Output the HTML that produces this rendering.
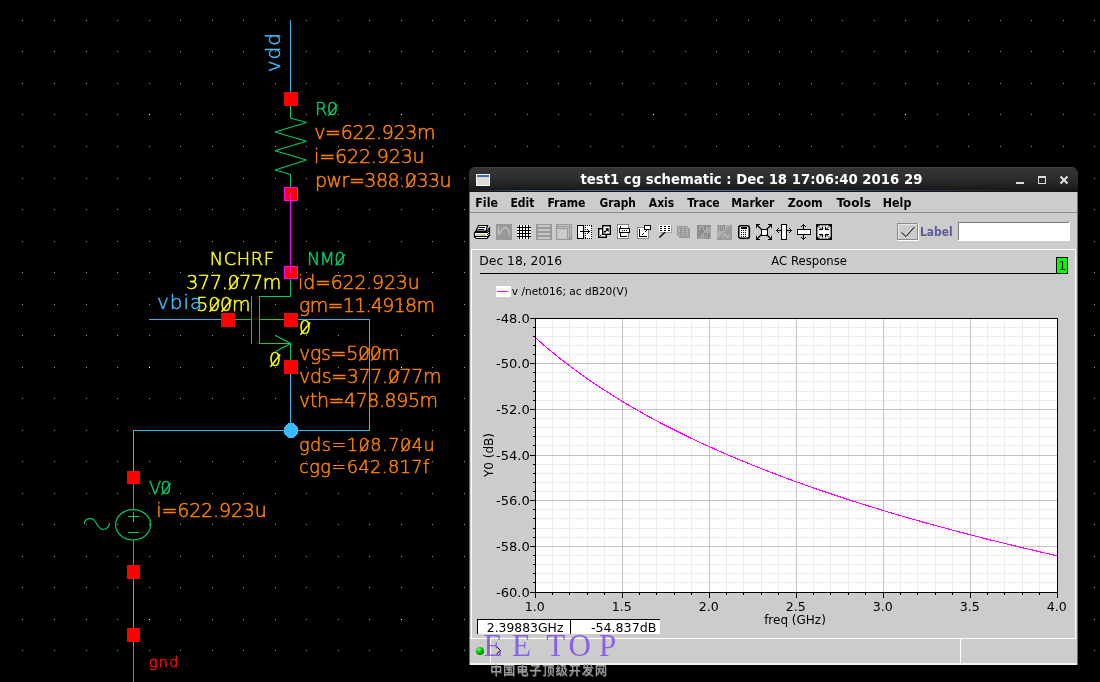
<!DOCTYPE html>
<html><head><meta charset="utf-8"><title>test1 cg schematic</title>
<style>
html,body{margin:0;padding:0;background:#000;}
body{width:1100px;height:682px;position:relative;overflow:hidden;font-family:"DejaVu Sans","Liberation Sans",sans-serif;}
svg.sch,svg.plot{position:absolute;left:0;top:0;will-change:transform;}
.a{position:absolute;}
#title{position:absolute;left:469px;top:167px;width:609px;height:25px;border-radius:6px 6px 0 0;background:linear-gradient(#4a4a4a 0,#343434 1px,#303030 9px,#282828 15px,#1e1e1e 20px,#191919 23px,#141414 25px);overflow:hidden;}
#title .glow{position:absolute;left:0;top:22.6px;width:609px;height:1.3px;background:linear-gradient(90deg,rgba(80,120,180,0) 0,rgba(84,124,186,.7) 10%,rgba(90,130,190,.85) 45%,rgba(84,124,186,.3) 75%,rgba(84,124,186,0) 95%);}
#win{position:absolute;left:469px;top:192px;width:609px;height:473px;background:#ccc;box-sizing:border-box;border-left:1px solid #6c6c6c;border-right:1px solid #6c6c6c;}
#menubar{position:absolute;left:-1px;top:0;width:608px;height:20px;border-bottom:1px solid #8c8c8c;}
#toolbar{position:absolute;left:-1px;top:21px;width:608px;height:35px;}
#panel{position:absolute;left:1px;top:57px;width:605px;height:389px;border-left:1px solid #fff;border-top:1px solid #fff;border-right:1px solid #fff;box-sizing:border-box;}
#status{position:absolute;left:0px;top:446px;width:607px;height:27px;border-top:1px solid #fff;border-bottom:2px solid #f2f2f2;box-sizing:border-box;}
.ro{position:absolute;top:427px;height:15px;background:#fff;border-left:1px solid #000;border-top:1px solid #000;box-sizing:border-box;font-size:12px;line-height:14px;white-space:nowrap;}
</style></head>
<body>
<svg class="sch" width="1100" height="682" viewBox="0 0 1100 682"><path d="M22 20.5h1M54 20.5h1M86 20.5h1M117 20.5h1M149 20.5h1M180 20.5h1M212 20.5h1M243 20.5h1M275 20.5h1M306 20.5h1M338 20.5h1M369 20.5h1M401 20.5h1M432 20.5h1M464 20.5h1M495 20.5h1M527 20.5h1M558 20.5h1M590 20.5h1M622 20.5h1M653 20.5h1M685 20.5h1M716 20.5h1M748 20.5h1M779 20.5h1M811 20.5h1M842 20.5h1M874 20.5h1M905 20.5h1M937 20.5h1M968 20.5h1M1000 20.5h1M1031 20.5h1M1063 20.5h1M1094 20.5h1M22 51.5h1M54 51.5h1M86 51.5h1M117 51.5h1M149 51.5h1M180 51.5h1M212 51.5h1M243 51.5h1M275 51.5h1M306 51.5h1M338 51.5h1M369 51.5h1M401 51.5h1M432 51.5h1M464 51.5h1M495 51.5h1M527 51.5h1M558 51.5h1M590 51.5h1M622 51.5h1M653 51.5h1M685 51.5h1M716 51.5h1M748 51.5h1M779 51.5h1M811 51.5h1M842 51.5h1M874 51.5h1M905 51.5h1M937 51.5h1M968 51.5h1M1000 51.5h1M1031 51.5h1M1063 51.5h1M1094 51.5h1M22 83.5h1M54 83.5h1M86 83.5h1M117 83.5h1M149 83.5h1M180 83.5h1M212 83.5h1M243 83.5h1M275 83.5h1M306 83.5h1M338 83.5h1M369 83.5h1M401 83.5h1M432 83.5h1M464 83.5h1M495 83.5h1M527 83.5h1M558 83.5h1M590 83.5h1M622 83.5h1M653 83.5h1M685 83.5h1M716 83.5h1M748 83.5h1M779 83.5h1M811 83.5h1M842 83.5h1M874 83.5h1M905 83.5h1M937 83.5h1M968 83.5h1M1000 83.5h1M1031 83.5h1M1063 83.5h1M1094 83.5h1M22 114.5h1M54 114.5h1M86 114.5h1M117 114.5h1M180 114.5h1M212 114.5h1M243 114.5h1M275 114.5h1M306 114.5h1M338 114.5h1M369 114.5h1M432 114.5h1M464 114.5h1M495 114.5h1M527 114.5h1M558 114.5h1M590 114.5h1M622 114.5h1M685 114.5h1M716 114.5h1M748 114.5h1M779 114.5h1M811 114.5h1M842 114.5h1M874 114.5h1M937 114.5h1M968 114.5h1M1000 114.5h1M1031 114.5h1M1063 114.5h1M1094 114.5h1M22 146.5h1M54 146.5h1M86 146.5h1M117 146.5h1M149 146.5h1M180 146.5h1M212 146.5h1M243 146.5h1M275 146.5h1M306 146.5h1M338 146.5h1M369 146.5h1M401 146.5h1M432 146.5h1M464 146.5h1M495 146.5h1M527 146.5h1M558 146.5h1M590 146.5h1M622 146.5h1M653 146.5h1M685 146.5h1M716 146.5h1M748 146.5h1M779 146.5h1M811 146.5h1M842 146.5h1M874 146.5h1M905 146.5h1M937 146.5h1M968 146.5h1M1000 146.5h1M1031 146.5h1M1063 146.5h1M1094 146.5h1M22 178.5h1M54 178.5h1M86 178.5h1M117 178.5h1M149 178.5h1M180 178.5h1M212 178.5h1M243 178.5h1M275 178.5h1M306 178.5h1M338 178.5h1M369 178.5h1M401 178.5h1M432 178.5h1M464 178.5h1M1094 178.5h1M22 209.5h1M54 209.5h1M86 209.5h1M117 209.5h1M149 209.5h1M180 209.5h1M212 209.5h1M243 209.5h1M275 209.5h1M306 209.5h1M338 209.5h1M369 209.5h1M401 209.5h1M432 209.5h1M464 209.5h1M1094 209.5h1M22 241.5h1M54 241.5h1M86 241.5h1M117 241.5h1M149 241.5h1M180 241.5h1M212 241.5h1M243 241.5h1M275 241.5h1M306 241.5h1M338 241.5h1M369 241.5h1M401 241.5h1M432 241.5h1M464 241.5h1M1094 241.5h1M22 272.5h1M54 272.5h1M86 272.5h1M117 272.5h1M149 272.5h1M180 272.5h1M212 272.5h1M243 272.5h1M275 272.5h1M306 272.5h1M338 272.5h1M369 272.5h1M401 272.5h1M432 272.5h1M464 272.5h1M1094 272.5h1M22 304.5h1M54 304.5h1M86 304.5h1M117 304.5h1M149 304.5h1M180 304.5h1M212 304.5h1M243 304.5h1M275 304.5h1M306 304.5h1M338 304.5h1M369 304.5h1M401 304.5h1M432 304.5h1M464 304.5h1M1094 304.5h1M22 335.5h1M54 335.5h1M86 335.5h1M117 335.5h1M149 335.5h1M180 335.5h1M212 335.5h1M243 335.5h1M275 335.5h1M306 335.5h1M338 335.5h1M369 335.5h1M401 335.5h1M432 335.5h1M464 335.5h1M1094 335.5h1M22 367.5h1M54 367.5h1M86 367.5h1M117 367.5h1M180 367.5h1M212 367.5h1M243 367.5h1M275 367.5h1M306 367.5h1M338 367.5h1M369 367.5h1M432 367.5h1M464 367.5h1M1094 367.5h1M22 398.5h1M54 398.5h1M86 398.5h1M117 398.5h1M149 398.5h1M180 398.5h1M212 398.5h1M243 398.5h1M275 398.5h1M306 398.5h1M338 398.5h1M369 398.5h1M401 398.5h1M432 398.5h1M464 398.5h1M1094 398.5h1M22 430.5h1M54 430.5h1M86 430.5h1M117 430.5h1M149 430.5h1M180 430.5h1M212 430.5h1M243 430.5h1M275 430.5h1M306 430.5h1M338 430.5h1M369 430.5h1M401 430.5h1M432 430.5h1M464 430.5h1M1094 430.5h1M22 461.5h1M54 461.5h1M86 461.5h1M117 461.5h1M149 461.5h1M180 461.5h1M212 461.5h1M243 461.5h1M275 461.5h1M306 461.5h1M338 461.5h1M369 461.5h1M401 461.5h1M432 461.5h1M464 461.5h1M1094 461.5h1M22 493.5h1M54 493.5h1M86 493.5h1M117 493.5h1M149 493.5h1M180 493.5h1M212 493.5h1M243 493.5h1M275 493.5h1M306 493.5h1M338 493.5h1M369 493.5h1M401 493.5h1M432 493.5h1M464 493.5h1M1094 493.5h1M22 524.5h1M54 524.5h1M86 524.5h1M117 524.5h1M149 524.5h1M180 524.5h1M212 524.5h1M243 524.5h1M275 524.5h1M306 524.5h1M338 524.5h1M369 524.5h1M401 524.5h1M432 524.5h1M464 524.5h1M1094 524.5h1M22 556.5h1M54 556.5h1M86 556.5h1M117 556.5h1M149 556.5h1M180 556.5h1M212 556.5h1M243 556.5h1M275 556.5h1M306 556.5h1M338 556.5h1M369 556.5h1M401 556.5h1M432 556.5h1M464 556.5h1M1094 556.5h1M22 587.5h1M54 587.5h1M86 587.5h1M117 587.5h1M149 587.5h1M180 587.5h1M212 587.5h1M243 587.5h1M275 587.5h1M306 587.5h1M338 587.5h1M369 587.5h1M401 587.5h1M432 587.5h1M464 587.5h1M1094 587.5h1M22 619.5h1M54 619.5h1M86 619.5h1M117 619.5h1M180 619.5h1M212 619.5h1M243 619.5h1M275 619.5h1M306 619.5h1M338 619.5h1M369 619.5h1M432 619.5h1M464 619.5h1M1094 619.5h1M22 650.5h1M54 650.5h1M86 650.5h1M117 650.5h1M149 650.5h1M180 650.5h1M212 650.5h1M243 650.5h1M275 650.5h1M306 650.5h1M338 650.5h1M369 650.5h1M401 650.5h1M432 650.5h1M464 650.5h1M1094 650.5h1" stroke="#9898b0"/><path d="M149 114.5h1M401 114.5h1M653 114.5h1M905 114.5h1M149 367.5h1M401 367.5h1M149 619.5h1M401 619.5h1" stroke="#fff"/><g shape-rendering="crispEdges"><g font-family="'DejaVu Sans Light','DejaVu Sans',sans-serif" font-weight="200" stroke-width="0.5" shape-rendering="auto"><text x="314.9" y="115.0" font-size="17.8" fill="#00cc66" stroke="#00cc66" letter-spacing="-0.4">R0̷</text><text x="314.2" y="139.0" font-size="19.0" fill="#ff8000" stroke="#ff8000" letter-spacing="-0.33">v=622.923m</text><text x="314.1" y="163.0" font-size="19.0" fill="#ff8000" stroke="#ff8000" letter-spacing="-0.14">i=622.923u</text><text x="314.9" y="186.5" font-size="19.0" fill="#ff8000" stroke="#ff8000" letter-spacing="-0.47">pwr=388.0̷33u</text><text x="209.7" y="265.0" font-size="17.8" fill="#ffff00" stroke="#ffff00" letter-spacing="0.66">NCHRF</text><text x="306.9" y="265.0" font-size="17.8" fill="#00cc66" stroke="#00cc66" letter-spacing="-0.7">NM0̷</text><text x="186.3" y="289.0" font-size="19.0" fill="#ffff00" stroke="#ffff00" letter-spacing="-0.29">377.0̷77m</text><text x="196.2" y="311.0" font-size="19.0" fill="#ffff00" stroke="#ffff00" letter-spacing="-0.14">50̷0̷m</text><text x="298.1" y="289.0" font-size="19.0" fill="#ff8000" stroke="#ff8000" letter-spacing="-0.22">id=622.923u</text><text x="299.1" y="312.0" font-size="19.0" fill="#ff8000" stroke="#ff8000" letter-spacing="-0.7">gm=11.4918m</text><text x="299.0" y="334.3" font-size="19.0" fill="#ffff00" stroke="#ffff00">0̷</text><text x="269.0" y="365.5" font-size="19.0" fill="#ffff00" stroke="#ffff00">0̷</text><text x="299.1" y="359.5" font-size="19.0" fill="#ff8000" stroke="#ff8000" letter-spacing="-0.35">vgs=50̷0̷m</text><text x="299.1" y="383.2" font-size="19.0" fill="#ff8000" stroke="#ff8000" letter-spacing="-0.34">vds=377.0̷77m</text><text x="299.1" y="407.0" font-size="19.0" fill="#ff8000" stroke="#ff8000" letter-spacing="-0.43">vth=478.895m</text><text x="299.0" y="451.0" font-size="17.7" fill="#ff8000" stroke="#ff8000" letter-spacing="0.49">gds=10̷8.70̷4u</text><text x="299.0" y="472.9" font-size="17.7" fill="#ff8000" stroke="#ff8000" letter-spacing="0.47">cgg=642.817f</text><text x="149.0" y="493.8" font-size="17.8" fill="#00cc66" stroke="#00cc66" letter-spacing="-1.0">V0̷</text><text x="156.3" y="517.2" font-size="19.0" fill="#ff8000" stroke="#ff8000" letter-spacing="-0.14">i=622.923u</text><text x="148.9" y="666.7" font-size="14.3" fill="#ff0000" stroke="#ff0000" stroke-width="0.6" letter-spacing="1.3">gnd</text><text x="157.0" y="309.0" font-size="20.0" fill="#3cbcfa" stroke="#3cbcfa" letter-spacing="1.0">vbia</text><text transform="translate(279.8 72.2) rotate(-90)" font-size="20.0" fill="#3cbcfa" stroke="#3cbcfa" letter-spacing="0.9">vdd</text></g><rect x="290" y="20" width="1" height="72" fill="#33b5f5"/><rect x="290" y="106" width="1" height="12" fill="#00cc66"/><polyline points="290.5,118 306.5,122.5 275,132 306.5,141.3 275,150.7 306.5,160 275,170 290.5,174.5" fill="none" stroke="#00cc66" stroke-width="1.15" stroke-linejoin="bevel" shape-rendering="auto"/><rect x="290" y="174" width="1" height="13" fill="#00cc66"/><rect x="290" y="194" width="1" height="78" fill="#ff00ff"/><rect x="290" y="279" width="1" height="18" fill="#00cc66"/><rect x="259" y="296" width="32" height="1" fill="#00cc66"/><rect x="259" y="296" width="1" height="48" fill="#00cc66"/><rect x="251" y="296" width="1" height="48" fill="#00cc66"/><rect x="235" y="319" width="17" height="1" fill="#00cc66"/><rect x="259" y="319" width="25" height="1" fill="#00cc66"/><rect x="259" y="343" width="32" height="1" fill="#00cc66"/><rect x="290" y="343" width="1" height="17" fill="#00cc66"/><path d="M275.5 335.5L290.5 343.5L275.5 351.5" fill="none" stroke="#00cc66" stroke-width="1.15" stroke-linejoin="bevel" shape-rendering="auto"/><rect x="149" y="319" width="72" height="1" fill="#33b5f5"/><rect x="298" y="319" width="72" height="1" fill="#33b5f5"/><rect x="369" y="319" width="1" height="112" fill="#33b5f5"/><rect x="133" y="430" width="237" height="1" fill="#33b5f5"/><rect x="290" y="374" width="1" height="56" fill="#33b5f5"/><rect x="133" y="430" width="1" height="41" fill="#33b5f5"/><rect x="133" y="484" width="1" height="25" fill="#00cc66"/><rect x="133" y="540" width="1" height="25" fill="#00cc66"/><ellipse cx="133.1" cy="524.8" rx="17.5" ry="15.2" fill="none" stroke="#00cc66" stroke-width="1.15" shape-rendering="auto"/><rect x="128" y="516" width="11" height="1" fill="#00cc66"/><rect x="133" y="512" width="1" height="10" fill="#00cc66"/><rect x="128" y="532" width="11" height="1" fill="#00cc66"/><path d="M84.5 524 C84.5 517.4 93 517.4 95 521 C97 524 99 529.5 103 529.5 C107 529.5 109.5 526 109.5 523" fill="none" stroke="#00cc66" stroke-width="1.15" shape-rendering="auto"/><rect x="133" y="578" width="1" height="50" fill="#33b5f5"/><rect x="133" y="642" width="1" height="40" fill="#00cc66"/><rect x="284" y="92" width="14" height="14" fill="#ff0000"/><rect x="284" y="187" width="14" height="14" fill="#ff00ff"/><rect x="285" y="188" width="12" height="12" fill="#ff0000"/><rect x="284" y="266" width="14" height="13" fill="#ff00ff"/><rect x="285" y="267" width="12" height="11" fill="#ff0000"/><rect x="290" y="193" width="1" height="8" fill="#ff00ff"/><rect x="290" y="266" width="1" height="7" fill="#ff00ff"/><rect x="221" y="313" width="14" height="14" fill="#ff0000"/><rect x="284" y="313" width="14" height="14" fill="#ff0000"/><rect x="284" y="360" width="14" height="14" fill="#ff0000"/><rect x="127" y="471" width="13" height="13" fill="#ff0000"/><rect x="127" y="565" width="13" height="14" fill="#ff0000"/><rect x="127" y="628" width="13" height="14" fill="#ff0000"/><ellipse cx="291" cy="430.5" rx="7.2" ry="7.6" fill="#38bcff"/></g></svg>
<div id="title">
 <div class="glow"></div>
 <svg class="a" style="left:7px;top:7px" width="14" height="12"><rect x="0.5" y="0.5" width="13" height="11" fill="#dcdcd4" stroke="#f4f4f4"/><rect x="1" y="1" width="12" height="2" fill="#3b6cb4"/></svg>
 <svg class="a" style="left:540px;top:6px" width="64" height="14" shape-rendering="crispEdges"><rect x="7" y="9" width="8" height="2" fill="#dcdcdc"/><path d="M29.5 3.5h7v7h-7z" fill="none" stroke="#dcdcdc"/><rect x="29" y="3" width="8" height="2" fill="#dcdcdc"/><path d="M51.5 3.5l7 7M58.5 3.5l-7 7" stroke="#dcdcdc" stroke-width="2.2" shape-rendering="auto" fill="none"/></svg>
</div>
<div id="win">
 <div id="menubar"></div>
 <div id="toolbar"></div>
 <div id="panel"></div>
 <div class="ro" style="left:7px;width:93px"></div>
 <div class="ro" style="left:100px;width:90px"></div>
 <div id="status">
  <div class="a" style="left:20px;top:0;width:1px;height:24px;background:#fff"></div>
  <div class="a" style="left:490px;top:0;width:1px;height:24px;background:#fff"></div>
  <div class="a" style="left:6px;top:8px;width:8px;height:8px;border-radius:4px;background:radial-gradient(circle at 35% 30%,#6f6 0,#0b0 45%,#060 100%)"></div>
  <svg class="a" style="left:25px;top:7px" width="8" height="9"><path d="M1.5 0.5l4 4-4 3.5" fill="none" stroke="#000" stroke-width="1"/></svg>
 </div>
</div>
<svg class="plot" width="1100" height="682" viewBox="0 0 1100 682" shape-rendering="crispEdges"><rect x="535" y="318" width="523" height="275" fill="#fff"/><rect x="552" y="318" width="1" height="274" fill="#ececec"/><rect x="569" y="318" width="1" height="274" fill="#ececec"/><rect x="587" y="318" width="1" height="274" fill="#ececec"/><rect x="604" y="318" width="1" height="274" fill="#ececec"/><rect x="639" y="318" width="1" height="274" fill="#ececec"/><rect x="656" y="318" width="1" height="274" fill="#ececec"/><rect x="674" y="318" width="1" height="274" fill="#ececec"/><rect x="691" y="318" width="1" height="274" fill="#ececec"/><rect x="726" y="318" width="1" height="274" fill="#ececec"/><rect x="743" y="318" width="1" height="274" fill="#ececec"/><rect x="761" y="318" width="1" height="274" fill="#ececec"/><rect x="778" y="318" width="1" height="274" fill="#ececec"/><rect x="813" y="318" width="1" height="274" fill="#ececec"/><rect x="830" y="318" width="1" height="274" fill="#ececec"/><rect x="848" y="318" width="1" height="274" fill="#ececec"/><rect x="865" y="318" width="1" height="274" fill="#ececec"/><rect x="900" y="318" width="1" height="274" fill="#ececec"/><rect x="917" y="318" width="1" height="274" fill="#ececec"/><rect x="935" y="318" width="1" height="274" fill="#ececec"/><rect x="952" y="318" width="1" height="274" fill="#ececec"/><rect x="987" y="318" width="1" height="274" fill="#ececec"/><rect x="1004" y="318" width="1" height="274" fill="#ececec"/><rect x="1022" y="318" width="1" height="274" fill="#ececec"/><rect x="1039" y="318" width="1" height="274" fill="#ececec"/><rect x="535" y="327" width="522" height="1" fill="#ececec"/><rect x="535" y="336" width="522" height="1" fill="#ececec"/><rect x="535" y="345" width="522" height="1" fill="#ececec"/><rect x="535" y="354" width="522" height="1" fill="#ececec"/><rect x="535" y="372" width="522" height="1" fill="#ececec"/><rect x="535" y="381" width="522" height="1" fill="#ececec"/><rect x="535" y="391" width="522" height="1" fill="#ececec"/><rect x="535" y="400" width="522" height="1" fill="#ececec"/><rect x="535" y="418" width="522" height="1" fill="#ececec"/><rect x="535" y="427" width="522" height="1" fill="#ececec"/><rect x="535" y="436" width="522" height="1" fill="#ececec"/><rect x="535" y="445" width="522" height="1" fill="#ececec"/><rect x="535" y="464" width="522" height="1" fill="#ececec"/><rect x="535" y="473" width="522" height="1" fill="#ececec"/><rect x="535" y="482" width="522" height="1" fill="#ececec"/><rect x="535" y="491" width="522" height="1" fill="#ececec"/><rect x="535" y="509" width="522" height="1" fill="#ececec"/><rect x="535" y="518" width="522" height="1" fill="#ececec"/><rect x="535" y="528" width="522" height="1" fill="#ececec"/><rect x="535" y="537" width="522" height="1" fill="#ececec"/><rect x="535" y="555" width="522" height="1" fill="#ececec"/><rect x="535" y="564" width="522" height="1" fill="#ececec"/><rect x="535" y="573" width="522" height="1" fill="#ececec"/><rect x="535" y="582" width="522" height="1" fill="#ececec"/><rect x="622" y="318" width="1" height="274" fill="#c4c4c4"/><rect x="709" y="318" width="1" height="274" fill="#c4c4c4"/><rect x="796" y="318" width="1" height="274" fill="#c4c4c4"/><rect x="883" y="318" width="1" height="274" fill="#c4c4c4"/><rect x="970" y="318" width="1" height="274" fill="#c4c4c4"/><rect x="535" y="363" width="522" height="1" fill="#c4c4c4"/><rect x="535" y="409" width="522" height="1" fill="#c4c4c4"/><rect x="535" y="455" width="522" height="1" fill="#c4c4c4"/><rect x="535" y="500" width="522" height="1" fill="#c4c4c4"/><rect x="535" y="546" width="522" height="1" fill="#c4c4c4"/><polyline points="535.5,337.7 539.9,341.6 544.2,345.4 548.5,349.1 552.9,352.7 557.2,356.2 561.6,359.7 566.0,363.1 570.3,366.4 574.6,369.6 579.0,372.8 583.4,375.9 587.7,379.0 592.0,382.0 596.4,384.9 600.8,387.8 605.1,390.6 609.5,393.4 613.8,396.2 618.1,398.8 622.5,401.5 626.9,404.1 631.2,406.6 635.6,409.2 639.9,411.6 644.2,414.1 648.6,416.5 653.0,418.9 657.3,421.2 661.6,423.5 666.0,425.7 670.4,428.0 674.7,430.2 679.1,432.4 683.4,434.5 687.8,436.6 692.1,438.7 696.5,440.7 700.8,442.8 705.1,444.8 709.5,446.8 713.9,448.7 718.2,450.6 722.6,452.6 726.9,454.4 731.2,456.3 735.6,458.1 739.9,460.0 744.3,461.8 748.6,463.5 753.0,465.3 757.4,467.0 761.7,468.8 766.1,470.5 770.4,472.1 774.8,473.8 779.1,475.5 783.4,477.1 787.8,478.7 792.2,480.3 796.5,481.9 800.9,483.4 805.2,485.0 809.5,486.5 813.9,488.1 818.2,489.6 822.6,491.0 827.0,492.5 831.3,494.0 835.7,495.4 840.0,496.9 844.4,498.3 848.7,499.7 853.0,501.1 857.4,502.5 861.8,503.9 866.1,505.2 870.5,506.6 874.8,507.9 879.2,509.3 883.5,510.6 887.8,511.9 892.2,513.2 896.5,514.5 900.9,515.7 905.2,517.0 909.6,518.3 914.0,519.5 918.3,520.7 922.7,522.0 927.0,523.2 931.3,524.4 935.7,525.6 940.0,526.8 944.4,527.9 948.8,529.1 953.1,530.3 957.5,531.4 961.8,532.6 966.2,533.7 970.5,534.8 974.9,536.0 979.2,537.1 983.5,538.2 987.9,539.3 992.2,540.4 996.6,541.4 1001.0,542.5 1005.3,543.6 1009.7,544.6 1014.0,545.7 1018.4,546.7 1022.7,547.8 1027.0,548.8 1031.4,549.8 1035.8,550.8 1040.1,551.9 1044.5,552.9 1048.8,553.9 1053.2,554.9 1057.5,555.8" fill="none" stroke="#ff00ff" stroke-width="1.1"/><rect x="535" y="318" width="523" height="1" fill="#000"/><rect x="535" y="592" width="523" height="1" fill="#000"/><rect x="535" y="318" width="1" height="275" fill="#000"/><rect x="1057" y="318" width="1" height="275" fill="#000"/><rect x="530" y="318" width="5" height="1" fill="#000"/><rect x="533" y="327" width="2" height="1" fill="#000"/><rect x="533" y="336" width="2" height="1" fill="#000"/><rect x="533" y="345" width="2" height="1" fill="#000"/><rect x="533" y="354" width="2" height="1" fill="#000"/><rect x="530" y="363" width="5" height="1" fill="#000"/><rect x="533" y="372" width="2" height="1" fill="#000"/><rect x="533" y="381" width="2" height="1" fill="#000"/><rect x="533" y="391" width="2" height="1" fill="#000"/><rect x="533" y="400" width="2" height="1" fill="#000"/><rect x="530" y="409" width="5" height="1" fill="#000"/><rect x="533" y="418" width="2" height="1" fill="#000"/><rect x="533" y="427" width="2" height="1" fill="#000"/><rect x="533" y="436" width="2" height="1" fill="#000"/><rect x="533" y="445" width="2" height="1" fill="#000"/><rect x="530" y="455" width="5" height="1" fill="#000"/><rect x="533" y="464" width="2" height="1" fill="#000"/><rect x="533" y="473" width="2" height="1" fill="#000"/><rect x="533" y="482" width="2" height="1" fill="#000"/><rect x="533" y="491" width="2" height="1" fill="#000"/><rect x="530" y="500" width="5" height="1" fill="#000"/><rect x="533" y="509" width="2" height="1" fill="#000"/><rect x="533" y="518" width="2" height="1" fill="#000"/><rect x="533" y="528" width="2" height="1" fill="#000"/><rect x="533" y="537" width="2" height="1" fill="#000"/><rect x="530" y="546" width="5" height="1" fill="#000"/><rect x="533" y="555" width="2" height="1" fill="#000"/><rect x="533" y="564" width="2" height="1" fill="#000"/><rect x="533" y="573" width="2" height="1" fill="#000"/><rect x="533" y="582" width="2" height="1" fill="#000"/><rect x="530" y="592" width="5" height="1" fill="#000"/><rect x="535" y="593" width="1" height="5" fill="#000"/><rect x="552" y="593" width="1" height="2" fill="#000"/><rect x="569" y="593" width="1" height="2" fill="#000"/><rect x="587" y="593" width="1" height="2" fill="#000"/><rect x="604" y="593" width="1" height="2" fill="#000"/><rect x="622" y="593" width="1" height="5" fill="#000"/><rect x="639" y="593" width="1" height="2" fill="#000"/><rect x="656" y="593" width="1" height="2" fill="#000"/><rect x="674" y="593" width="1" height="2" fill="#000"/><rect x="691" y="593" width="1" height="2" fill="#000"/><rect x="709" y="593" width="1" height="5" fill="#000"/><rect x="726" y="593" width="1" height="2" fill="#000"/><rect x="743" y="593" width="1" height="2" fill="#000"/><rect x="761" y="593" width="1" height="2" fill="#000"/><rect x="778" y="593" width="1" height="2" fill="#000"/><rect x="796" y="593" width="1" height="5" fill="#000"/><rect x="813" y="593" width="1" height="2" fill="#000"/><rect x="830" y="593" width="1" height="2" fill="#000"/><rect x="848" y="593" width="1" height="2" fill="#000"/><rect x="865" y="593" width="1" height="2" fill="#000"/><rect x="883" y="593" width="1" height="5" fill="#000"/><rect x="900" y="593" width="1" height="2" fill="#000"/><rect x="917" y="593" width="1" height="2" fill="#000"/><rect x="935" y="593" width="1" height="2" fill="#000"/><rect x="952" y="593" width="1" height="2" fill="#000"/><rect x="970" y="593" width="1" height="5" fill="#000"/><rect x="987" y="593" width="1" height="2" fill="#000"/><rect x="1004" y="593" width="1" height="2" fill="#000"/><rect x="1022" y="593" width="1" height="2" fill="#000"/><rect x="1039" y="593" width="1" height="2" fill="#000"/><rect x="1057" y="593" width="1" height="5" fill="#000"/><g font-family="'DejaVu Sans',sans-serif" font-size="12" fill="#000"><text x="496" y="323.3" textLength="33.8" lengthAdjust="spacingAndGlyphs">-48.0</text><text x="496" y="368.3" textLength="33.8" lengthAdjust="spacingAndGlyphs">-50.0</text><text x="496" y="414.3" textLength="33.8" lengthAdjust="spacingAndGlyphs">-52.0</text><text x="496" y="460.3" textLength="33.8" lengthAdjust="spacingAndGlyphs">-54.0</text><text x="496" y="505.3" textLength="33.8" lengthAdjust="spacingAndGlyphs">-56.0</text><text x="496" y="551.3" textLength="33.8" lengthAdjust="spacingAndGlyphs">-58.0</text><text x="496" y="597.3" textLength="33.8" lengthAdjust="spacingAndGlyphs">-60.0</text><text x="524.8" y="610.6" textLength="20" lengthAdjust="spacingAndGlyphs">1.0</text><text x="611.8" y="610.6" textLength="20" lengthAdjust="spacingAndGlyphs">1.5</text><text x="698.8" y="610.6" textLength="20" lengthAdjust="spacingAndGlyphs">2.0</text><text x="785.8" y="610.6" textLength="20" lengthAdjust="spacingAndGlyphs">2.5</text><text x="872.8" y="610.6" textLength="20" lengthAdjust="spacingAndGlyphs">3.0</text><text x="959.8" y="610.6" textLength="20" lengthAdjust="spacingAndGlyphs">3.5</text><text x="1046.8" y="610.6" textLength="20" lengthAdjust="spacingAndGlyphs">4.0</text><text x="795" y="624" text-anchor="middle">freq (GHz)</text><text x="486.8" y="631.5" textLength="76.6" lengthAdjust="spacingAndGlyphs">2.39883GHz</text><text x="590.9" y="631.5" textLength="65.5" lengthAdjust="spacingAndGlyphs">-54.837dB</text><text transform="translate(493 455) rotate(-90)" text-anchor="middle">Y0 (dB)</text></g><g font-family="'DejaVu Sans',sans-serif" font-size="12" fill="#000"><text x="479.3" y="265" textLength="82.7" lengthAdjust="spacingAndGlyphs">Dec 18, 2016</text><text x="771.3" y="264.8" textLength="75.6" lengthAdjust="spacingAndGlyphs">AC Response</text><text x="511.8" y="295" font-size="10.2" textLength="116" lengthAdjust="spacingAndGlyphs">v /net016; ac dB20(V)</text></g><rect x="480" y="273" width="577" height="1" fill="#000"/><rect x="1056" y="257" width="12" height="17" fill="#000"/><rect x="1057" y="258" width="10" height="15" fill="#00ff00"/><text x="1058.5" y="270" font-family="DejaVu Sans,sans-serif" font-size="12">1</text><rect x="496" y="286" width="15" height="11" fill="#fff"/><rect x="497" y="291" width="11" height="1" fill="#ff00ff"/><polygon points="478.5,225.5 487.5,225.5 486,231 476,231" fill="#fff" stroke="#000" stroke-width="1.2" shape-rendering="auto"/><rect x="479" y="227" width="6" height="1" fill="#000"/><rect x="478" y="229" width="6" height="1" fill="#000"/><path d="M475.5 231.5h11.5l2.5-3.5v7l-2.5 3.5h-10.5l-2-1.5v-4z" fill="#fff" stroke="#000" stroke-width="1.2" shape-rendering="auto"/><rect x="475" y="232" width="12" height="1" fill="#000"/><rect x="475" y="233" width="12" height="1" fill="#fff"/><rect x="476" y="234" width="10" height="2" fill="#d0d0d0"/><rect x="481" y="234" width="3" height="2" fill="#e8e000"/><rect x="475" y="236" width="12" height="1" fill="#000"/><rect x="476" y="237" width="10" height="1" fill="#fff"/><rect x="488" y="229" width="1" height="1" fill="#000"/><rect x="489" y="230" width="1" height="1" fill="#000"/><rect x="488" y="231" width="1" height="1" fill="#000"/><rect x="489" y="232" width="1" height="1" fill="#000"/><rect x="488" y="233" width="1" height="1" fill="#000"/><rect x="489" y="234" width="1" height="1" fill="#000"/><rect x="488" y="235" width="1" height="1" fill="#000"/><rect x="487" y="236" width="1" height="1" fill="#000"/><rect x="487" y="234" width="1" height="1" fill="#000"/><rect x="487" y="232" width="1" height="1" fill="#000"/><rect x="496" y="224" width="16" height="16" fill="#999"/><path d="M498.5 226.5v8.5 M498.7 234 L501.5 231 M500.8 231.8 C502 229 503.2 227.6 505 227.6 C507.8 227.6 509.2 231 509.6 235.2" fill="none" stroke="#c4c4c4" stroke-width="1.3" shape-rendering="auto"/><path d="M519 225h10v1h1v1h1v10h-1v1h-1v1h-10v-1h-1v-1h-1v-10h1v-1h1z" fill="#fff"/><rect x="519" y="225" width="1" height="14" fill="#000"/><rect x="522" y="225" width="1" height="14" fill="#000"/><rect x="525" y="225" width="1" height="14" fill="#000"/><rect x="528" y="225" width="1" height="14" fill="#000"/><rect x="517" y="227" width="14" height="1" fill="#000"/><rect x="517" y="230" width="14" height="1" fill="#000"/><rect x="517" y="233" width="14" height="1" fill="#000"/><rect x="517" y="236" width="14" height="1" fill="#000"/><rect x="536" y="224" width="16" height="16" fill="#999"/><rect x="538" y="225" width="12" height="2" fill="#c6c6c6"/><rect x="538" y="229" width="12" height="2" fill="#c6c6c6"/><rect x="538" y="233" width="12" height="2" fill="#c6c6c6"/><rect x="538" y="237" width="12" height="2" fill="#c6c6c6"/><rect x="556" y="224" width="16" height="16" fill="#999"/><rect x="558" y="225" width="13" height="1" fill="#c2c2c2"/><rect x="570" y="225" width="1" height="11" fill="#c2c2c2"/><rect x="557" y="227" width="12" height="1" fill="#c2c2c2"/><rect x="568" y="227" width="1" height="11" fill="#c2c2c2"/><rect x="557" y="229" width="10" height="10" fill="#c6c6c6"/><rect x="558" y="230" width="8" height="8" fill="#cbcbcb"/><rect x="577" y="225" width="7" height="14" fill="#000"/><rect x="578" y="226" width="5" height="12" fill="#fff"/><rect x="585" y="225" width="7" height="14" fill="#fff"/><rect x="585" y="225" width="1" height="1" fill="#000"/><rect x="585" y="238" width="1" height="1" fill="#000"/><rect x="587" y="225" width="1" height="1" fill="#000"/><rect x="587" y="238" width="1" height="1" fill="#000"/><rect x="589" y="225" width="1" height="1" fill="#000"/><rect x="589" y="238" width="1" height="1" fill="#000"/><rect x="591" y="225" width="1" height="1" fill="#000"/><rect x="591" y="238" width="1" height="1" fill="#000"/><rect x="585" y="225" width="1" height="1" fill="#000"/><rect x="591" y="226" width="1" height="1" fill="#000"/><rect x="585" y="227" width="1" height="1" fill="#000"/><rect x="591" y="228" width="1" height="1" fill="#000"/><rect x="585" y="229" width="1" height="1" fill="#000"/><rect x="591" y="230" width="1" height="1" fill="#000"/><rect x="585" y="231" width="1" height="1" fill="#000"/><rect x="591" y="232" width="1" height="1" fill="#000"/><rect x="585" y="233" width="1" height="1" fill="#000"/><rect x="591" y="234" width="1" height="1" fill="#000"/><rect x="585" y="235" width="1" height="1" fill="#000"/><rect x="591" y="236" width="1" height="1" fill="#000"/><rect x="585" y="237" width="1" height="1" fill="#000"/><rect x="591" y="238" width="1" height="1" fill="#000"/><rect x="580" y="231" width="10" height="1" fill="#000"/><rect x="588" y="230" width="1" height="3" fill="#000"/><rect x="587" y="229" width="1" height="1" fill="#000"/><rect x="587" y="233" width="1" height="1" fill="#000"/><g shape-rendering="auto"><rect x="598" y="228" width="9" height="10" fill="#000"/><rect x="599.4" y="229.4" width="6.2" height="7.2" fill="#fff"/><rect x="602" y="225" width="9" height="10" fill="#000"/><rect x="603.4" y="226.4" width="6.2" height="7.2" fill="#fff"/><path d="M600.3 235.7l4.6-4.6" stroke="#000" stroke-width="1.1" stroke-dasharray="1.5 1.1" fill="none"/><polygon points="605,228.3 608.7,228.3 608.7,232" fill="#000"/><path d="M604.5 232.5l3-3" stroke="#000" stroke-width="1.1"/></g><rect x="617" y="224" width="12" height="15" fill="#808080"/><rect x="618" y="225" width="10" height="13" fill="#fff"/><rect x="620" y="226" width="1" height="11" fill="#000"/><rect x="620" y="236" width="7" height="1" fill="#000"/><rect x="619" y="228" width="11" height="5" fill="#000"/><rect x="620" y="229" width="9" height="3" fill="#fff"/><rect x="622" y="230" width="1" height="1" fill="#000"/><rect x="624" y="230" width="1" height="1" fill="#000"/><rect x="626" y="230" width="1" height="1" fill="#000"/><rect x="637" y="227" width="12" height="12" fill="#8a8a8a"/><rect x="638" y="228" width="10" height="10" fill="#fff"/><rect x="639" y="229" width="1" height="8" fill="#000"/><rect x="639" y="236" width="8" height="1" fill="#000"/><rect x="644" y="225" width="7" height="5" fill="#000"/><rect x="645" y="226" width="5" height="3" fill="#fff"/><rect x="642" y="234" width="1" height="1" fill="#000"/><rect x="643" y="233" width="1" height="1" fill="#000"/><rect x="645" y="231" width="1" height="1" fill="#000"/><rect x="646" y="230" width="1" height="1" fill="#000"/><rect x="660" y="226" width="12" height="7" fill="#a0a0a0"/><rect x="659" y="225" width="12" height="7" fill="#fff"/><rect x="660" y="226" width="2" height="1" fill="#000"/><rect x="660" y="228" width="2" height="1" fill="#000"/><rect x="660" y="230" width="2" height="1" fill="#000"/><rect x="664" y="226" width="2" height="1" fill="#000"/><rect x="664" y="228" width="2" height="1" fill="#000"/><rect x="664" y="230" width="2" height="1" fill="#000"/><rect x="668" y="226" width="2" height="1" fill="#000"/><rect x="668" y="228" width="2" height="1" fill="#000"/><rect x="668" y="230" width="2" height="1" fill="#000"/><path d="M665 232.3l-5.6 5.2" stroke="#000" stroke-width="1.4" fill="none" shape-rendering="auto"/><rect x="677" y="226" width="11" height="10" fill="#9a9a9a"/><rect x="679" y="228" width="11" height="10" fill="#9a9a9a"/><rect x="678" y="227" width="2" height="1" fill="#bcbcbc"/><rect x="678" y="229" width="2" height="1" fill="#bcbcbc"/><rect x="678" y="231" width="2" height="1" fill="#bcbcbc"/><rect x="678" y="233" width="2" height="1" fill="#bcbcbc"/><rect x="678" y="235" width="2" height="1" fill="#bcbcbc"/><rect x="682" y="227" width="2" height="1" fill="#bcbcbc"/><rect x="682" y="229" width="2" height="1" fill="#bcbcbc"/><rect x="682" y="231" width="2" height="1" fill="#bcbcbc"/><rect x="682" y="233" width="2" height="1" fill="#bcbcbc"/><rect x="682" y="235" width="2" height="1" fill="#bcbcbc"/><rect x="686" y="227" width="2" height="1" fill="#bcbcbc"/><rect x="686" y="229" width="2" height="1" fill="#bcbcbc"/><rect x="686" y="231" width="2" height="1" fill="#bcbcbc"/><rect x="686" y="233" width="2" height="1" fill="#bcbcbc"/><rect x="686" y="235" width="2" height="1" fill="#bcbcbc"/><rect x="697" y="225" width="14" height="14" fill="#a6a6a6"/><polygon points="697,225 711,225 697,239" fill="#8c8c8c" shape-rendering="auto"/><path d="M698.5 230.5c1.5 0 1-5 2.5-5 M702.5 225.5c0.5 4 1 5.5 3 5.5s1.2-3 1.5-5.5" stroke="#c0c0c0" fill="none" shape-rendering="auto"/><path d="M704.5 237.5v-4h1.5v4.5h2v-4.5h1.5v4" stroke="#8a8a8a" fill="none"/><rect x="717" y="225" width="15" height="15" fill="#9c9c9c"/><polygon points="717,225 731,225 717,239" fill="#b0b0b0" shape-rendering="auto"/><path d="M718.5 230.5v-5h2v5h1.5v-5h2v4.5" stroke="#8e8e8e" fill="none"/><path d="M722.5 238.5c1-3 1-5 2.5-5s0.5 4.5 2 4.5s0.8-4 2.5-4" stroke="#c4c4c4" fill="none" shape-rendering="auto"/><rect x="739.5" y="226.5" width="11" height="13" rx="2" fill="#9a9a9a" shape-rendering="auto"/><rect x="738.75" y="225.75" width="10.5" height="12.5" rx="2" fill="#fff" stroke="#000" stroke-width="1.5" shape-rendering="auto"/><rect x="741" y="227" width="6" height="2" fill="#000"/><rect x="741" y="230" width="1" height="1" fill="#000"/><rect x="741" y="232" width="1" height="1" fill="#000"/><rect x="741" y="234" width="1" height="1" fill="#000"/><rect x="741" y="236" width="1" height="1" fill="#000"/><rect x="743" y="230" width="1" height="1" fill="#000"/><rect x="743" y="232" width="1" height="1" fill="#000"/><rect x="743" y="234" width="1" height="1" fill="#000"/><rect x="743" y="236" width="1" height="1" fill="#000"/><rect x="745" y="230" width="1" height="1" fill="#000"/><rect x="745" y="232" width="1" height="1" fill="#000"/><rect x="745" y="234" width="1" height="1" fill="#000"/><rect x="745" y="236" width="1" height="1" fill="#000"/><rect x="761" y="229" width="7" height="7" fill="#000"/><rect x="762" y="230" width="5" height="5" fill="#fff"/><path d="M756.5 224.5l5 5 M771.5 224.5l-5 5 M756.5 239.5l5-5 M771.5 239.5l-5-5" stroke="#000" stroke-width="1.2" fill="none" shape-rendering="auto"/><path d="M756.5 228v-3.5h3.5 M768 224.5h3.5v3.5 M756.5 236v3.5h3.5 M768 239.5h3.5v-3.5" stroke="#000" stroke-width="1.4" fill="none"/><rect x="781" y="224" width="6" height="16" fill="#000"/><rect x="782" y="225" width="4" height="14" fill="#fff"/><rect x="776" y="230" width="5" height="1" fill="#000"/><rect x="787" y="230" width="5" height="1" fill="#000"/><rect x="777" y="229" width="1" height="3" fill="#000"/><rect x="778" y="228" width="1" height="1" fill="#000"/><rect x="778" y="232" width="1" height="1" fill="#000"/><rect x="790" y="229" width="1" height="3" fill="#000"/><rect x="789" y="228" width="1" height="1" fill="#000"/><rect x="789" y="232" width="1" height="1" fill="#000"/><rect x="797" y="229" width="14" height="6" fill="#000"/><rect x="798" y="230" width="12" height="4" fill="#fff"/><rect x="803" y="224" width="1" height="5" fill="#000"/><rect x="803" y="235" width="1" height="5" fill="#000"/><rect x="802" y="225" width="3" height="1" fill="#000"/><rect x="801" y="226" width="1" height="1" fill="#000"/><rect x="805" y="226" width="1" height="1" fill="#000"/><rect x="802" y="238" width="3" height="1" fill="#000"/><rect x="801" y="237" width="1" height="1" fill="#000"/><rect x="805" y="237" width="1" height="1" fill="#000"/><rect x="816.7" y="224.7" width="14.6" height="14.6" fill="#fff" stroke="#000" stroke-width="1.4" shape-rendering="auto"/><path d="M817 225h2.5l-2.5 2.5z M831 225v2.5l-2.5-2.5z M817 239v-2.5l2.5 2.5z M831 239h-2.5l2.5-2.5z" fill="#000" stroke="none" shape-rendering="auto"/><path d="M818.7 226.3l3 3 M829.3 226.3l-3 3 M818.7 237.7l3-3 M829.3 237.7l-3-3" stroke="#000" stroke-width="1" fill="none" shape-rendering="auto"/><path d="M819 229.5h3.5v-3 M829 229.5h-3.5v-3 M819 234.5h3.5v3 M829 234.5h-3.5v3" stroke="#000" stroke-width="1.2" fill="none" shape-rendering="auto"/><rect x="897" y="223" width="22" height="18" fill="#fff"/><rect x="897" y="223" width="21" height="17" fill="#8c8c8c"/><rect x="898" y="224" width="19" height="15" fill="#ccc"/><rect x="898" y="224" width="19" height="1" fill="#e8e8e8"/><rect x="898" y="224" width="1" height="15" fill="#e8e8e8"/><path d="M901.5 232.5l4.5 4 8.5-9.5" stroke="#000" stroke-width="1" fill="none" shape-rendering="auto"/><rect x="958" y="222" width="112" height="19" fill="#fff"/><rect x="958" y="222" width="111" height="18" fill="#7a7a7a"/><rect x="959" y="223" width="110" height="17" fill="#fff"/><text x="920" y="236.2" font-family="'DejaVu Sans Condensed','DejaVu Sans',sans-serif" font-stretch="condensed" font-weight="bold" font-size="12" fill="#5c5c99" textLength="32.6" lengthAdjust="spacingAndGlyphs">Label</text><g font-family="'DejaVu Sans Condensed','DejaVu Sans',sans-serif" font-stretch="condensed" font-weight="bold" font-size="12" fill="#000"><text x="475.3" y="206.8" textLength="22.63" lengthAdjust="spacingAndGlyphs">File</text><text x="510.4" y="206.8" textLength="23.97" lengthAdjust="spacingAndGlyphs">Edit</text><text x="547.4" y="206.8" textLength="38.11" lengthAdjust="spacingAndGlyphs">Frame</text><text x="599.6" y="206.8" textLength="36.3" lengthAdjust="spacingAndGlyphs">Graph</text><text x="648.8" y="206.8" textLength="25.45" lengthAdjust="spacingAndGlyphs">Axis</text><text x="687.3" y="206.8" textLength="32.39" lengthAdjust="spacingAndGlyphs">Trace</text><text x="731.3" y="206.8" textLength="43.15" lengthAdjust="spacingAndGlyphs">Marker</text><text x="787.7" y="206.8" textLength="35.01" lengthAdjust="spacingAndGlyphs">Zoom</text><text x="836.4" y="206.8" textLength="34.46" lengthAdjust="spacingAndGlyphs">Tools</text><text x="882.8" y="206.8" textLength="28.54" lengthAdjust="spacingAndGlyphs">Help</text></g><text x="580.4" y="183.8" font-family="'DejaVu Sans',sans-serif" font-weight="bold" font-size="13.3" fill="#fff" textLength="342" lengthAdjust="spacingAndGlyphs">test1 cg schematic : Dec 18 17:06:40 2016 29</text></svg>
<svg class="a" id="wm1" style="left:0;top:0;will-change:transform" width="1100" height="682"><text x="483.6 512.1 546.3 568.6 599.1" y="656" font-family="'Liberation Serif',serif" font-size="31" fill="#7038e8" fill-opacity=".72">EETOP</text></svg>
<div class="a" id="wm2" style="will-change:transform;left:490px;top:662.5px;font-family:'Liberation Sans','Noto Sans CJK SC',sans-serif;font-weight:500;font-size:12.2px;letter-spacing:0.9px;line-height:16px;color:#9c9c9c;white-space:nowrap;text-shadow:0.5px 0.5px 0.5px #5a5a5a">中国电子顶级开发网</div>
</body></html>
